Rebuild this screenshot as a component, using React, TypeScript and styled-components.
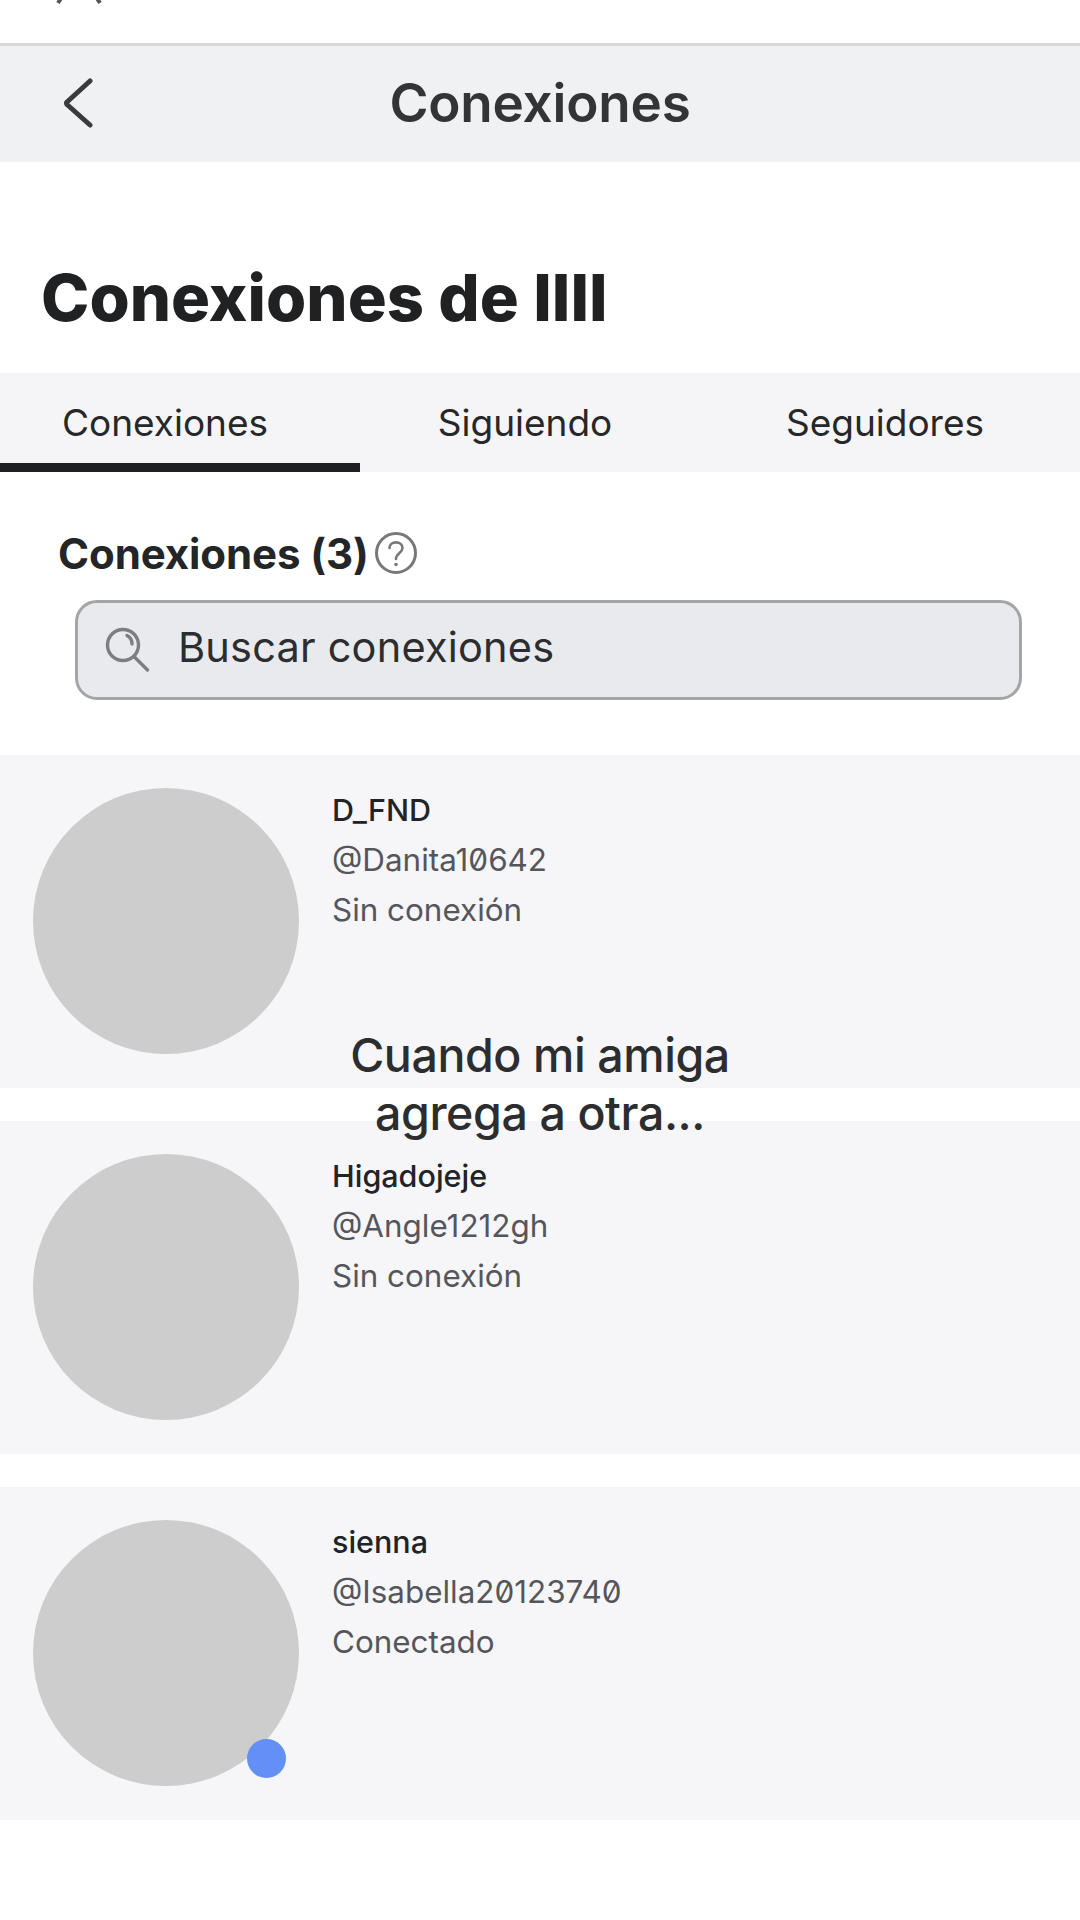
import React from "react";
import styled, { createGlobalStyle } from "styled-components";

const Global = createGlobalStyle`
  html, body { margin: 0; padding: 0; background: #fff; }
  body { font-family: Inter, "Noto Sans", sans-serif; }
`;

const Page = styled.div`
  position: relative;
  width: 1080px;
  height: 1920px;
  overflow: hidden;
  background: #fff;
  display: flex;
  flex-direction: column;
`;

const TopStrip = styled.div`
  height: 43px;
  padding-left: 55px;
  border-bottom: 3px solid #d9d9da;
  overflow: hidden;
`;

const TopGlyph = styled.svg`
  display: block;
  margin-top: -41px;
`;

const Header = styled.header`
  height: 116px;
  background: #f0f1f3;
  position: relative;
  display: flex;
  align-items: center;
  justify-content: center;
`;

const BackIcon = styled.svg`
  position: absolute;
  left: 62px;
  top: 32px;
`;

const HeaderTitle = styled.h1`
  margin: -2px 0 0;
  font-size: 53px;
  font-weight: 600;
  letter-spacing: -0.2px;
  color: #333436;
`;

const PageTitle = styled.h2`
  margin: 0;
  padding: 97px 0 0 41px;
  height: 114px;
  font-size: 65px;
  line-height: 78px;
  font-weight: 800;
  letter-spacing: 0.05px;
  color: #202123;
`;

const Tabs = styled.nav`
  display: grid;
  grid-template-columns: repeat(3, 360px);
  height: 99px;
  background: #f5f5f7;
`;

const Tab = styled.div<{ $active?: boolean }>`
  display: flex;
  align-items: center;
  justify-content: center;
  box-sizing: border-box;
  padding: 8px 30px 0 0;
  font-size: 37px;
  color: #262729;
  border-bottom: 9px solid ${(p) => (p.$active ? "#1f2023" : "transparent")};
`;

const SectionHead = styled.div`
  display: flex;
  align-items: center;
  gap: 5px;
  padding: 59px 0 0 58px;
  height: 44px;
`;

const SectionTitle = styled.span`
  font-size: 42px;
  font-weight: 700;
  letter-spacing: -0.1px;
  color: #242527;
`;

const SearchBar = styled.div`
  box-sizing: border-box;
  margin: 25px 0 0 75px;
  width: 947px;
  height: 100px;
  background: #e9eaed;
  border: 3px solid #a4a5a7;
  border-radius: 22px;
  display: flex;
  align-items: center;
  padding: 0 0 6px 27px;
  gap: 27px;
`;

const SearchText = styled.span`
  font-size: 41.5px;
  color: #2c2d30;
  letter-spacing: 0.2px;
`;

const SearchIcon = styled.svg`
  margin-top: 6px;
`;

const List = styled.div`
  margin-top: 55px;
  display: flex;
  flex-direction: column;
  gap: 33px;
`;

const Row = styled.div`
  box-sizing: border-box;
  height: 333px;
  background: #f6f6f9;
  display: flex;
  padding: 33px 0 0 33px;
  gap: 33px;
`;

const Avatar = styled.div`
  position: relative;
  width: 266px;
  height: 266px;
  border-radius: 50%;
  background: #cdcdcd;
  flex: none;
`;

const OnlineDot = styled.span`
  position: absolute;
  right: 13px;
  bottom: 8px;
  width: 39px;
  height: 39px;
  border-radius: 50%;
  background: #648ff5;
`;

const Info = styled.div`
  display: flex;
  flex-direction: column;
  margin-top: -3px;
`;

const Name = styled.div`
  font-size: 30.5px;
  line-height: 50px;
  font-weight: 500;
  color: #222326;
`;

const Detail = styled.div`
  font-size: 31.4px;
  line-height: 50px;
  color: #55565b;
  font-feature-settings: "zero" 1;
`;

const Caption = styled.div`
  position: absolute;
  left: 0;
  right: 0;
  top: 1026px;
  text-align: center;
  font-size: 46.5px;
  line-height: 58px;
  font-weight: 550;
  letter-spacing: -0.4px;
  color: #2c2d2f;
`;

const people = [
  { name: "D_FND", handle: "@Danita10642", status: "Sin conexión" },
  { name: "Higadojeje", handle: "@Angle1212gh", status: "Sin conexión" },
  { name: "sienna", handle: "@Isabella20123740", status: "Conectado", online: true },
];

export default function App() {
  return (
    <Page>
      <Global />
      <TopStrip>
        <TopGlyph width="48" height="46" viewBox="0 0 48 46" fill="none" stroke="#55565a" strokeWidth="4">
          <path d="M24 4 L32 24 L45 44 M24 4 L16 24 L3 44" />
        </TopGlyph>
      </TopStrip>
      <Header>
        <BackIcon width="32" height="50" viewBox="0 0 32 50" fill="none" stroke="#3a3b3e" strokeWidth="5" strokeLinecap="round" strokeLinejoin="round">
          <path d="M28 3 L5 24 Q4 25 5 26.5 L28 47" />
        </BackIcon>
        <HeaderTitle>Conexiones</HeaderTitle>
      </Header>
      <PageTitle>Conexiones de IIII</PageTitle>
      <Tabs>
        <Tab $active>Conexiones</Tab>
        <Tab>Siguiendo</Tab>
        <Tab>Seguidores</Tab>
      </Tabs>
      <SectionHead>
        <SectionTitle>Conexiones (3)</SectionTitle>
        <svg width="44" height="44" viewBox="0 0 44 44" fill="none">
          <circle cx="22" cy="22" r="19.5" stroke="#77787a" strokeWidth="3" />
          <path d="M15.5 17 C15.5 9.5 28.5 9.5 28.5 17 C28.5 22 22 22 22 28" stroke="#77787a" strokeWidth="2.6" strokeLinecap="round" />
          <circle cx="22" cy="33.5" r="1.8" fill="#77787a" />
        </svg>
      </SectionHead>
      <SearchBar>
        <SearchIcon width="46" height="46" viewBox="0 0 46 46" fill="none" stroke="#7d7e81" strokeWidth="3.4" strokeLinecap="round">
          <circle cx="18" cy="18" r="15.5" />
          <path d="M22 8.5 C25 10 27 13 27 17" />
          <path d="M29.5 30 L42.5 43" />
        </SearchIcon>
        <SearchText>Buscar conexiones</SearchText>
      </SearchBar>
      <List>
        {people.map((p) => (
          <Row key={p.name}>
            <Avatar>{p.online && <OnlineDot />}</Avatar>
            <Info>
              <Name>{p.name}</Name>
              <Detail>{p.handle}</Detail>
              <Detail>{p.status}</Detail>
            </Info>
          </Row>
        ))}
      </List>
      <Caption>
        Cuando mi amiga
        <br />
        agrega a otra...
      </Caption>
    </Page>
  );
}
